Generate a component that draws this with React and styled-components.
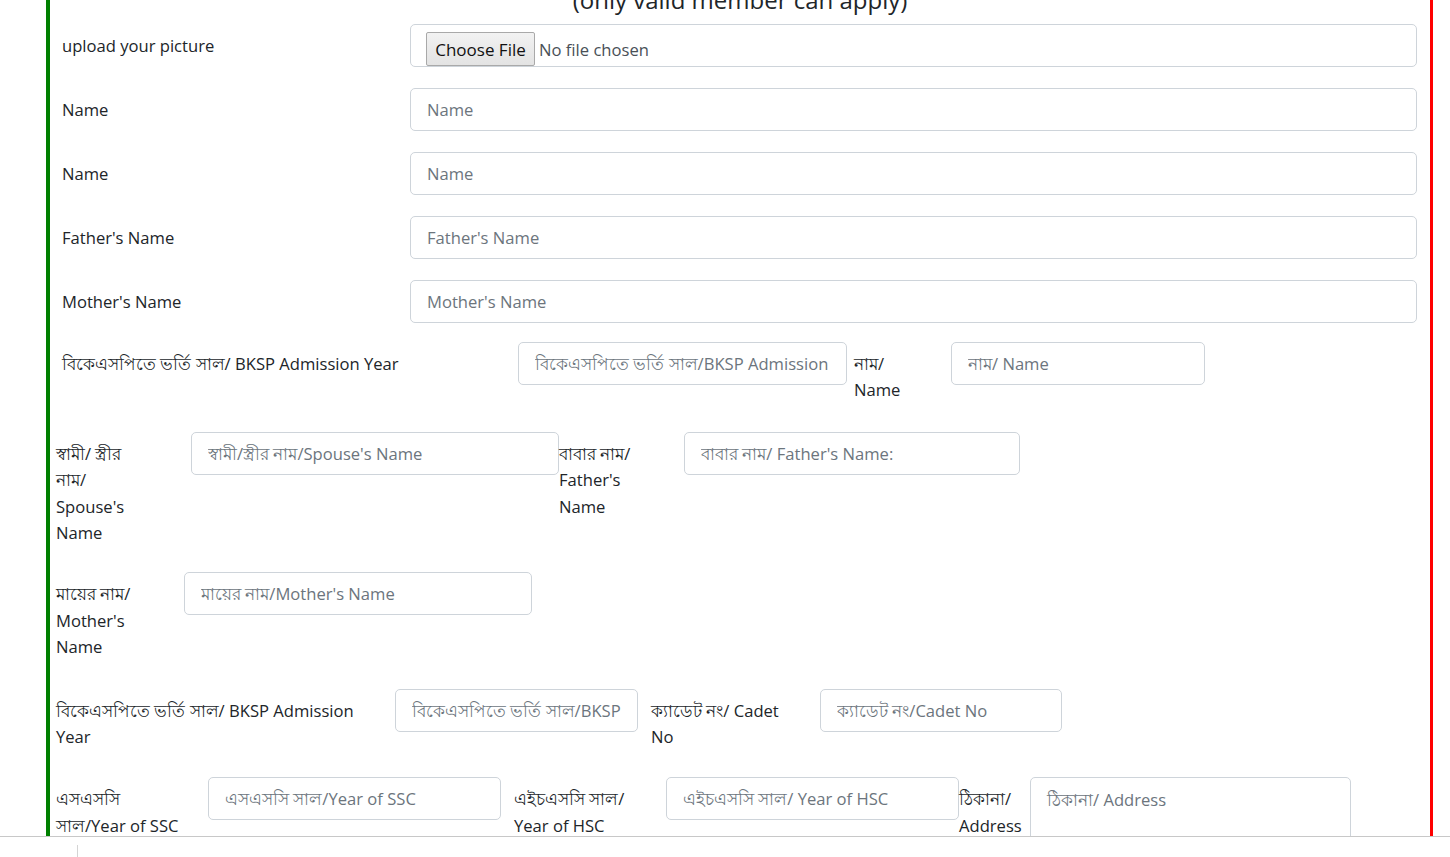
import React from "react";
import styled, { createGlobalStyle } from "styled-components";

const GlobalStyle = createGlobalStyle`
  html, body {
    margin: 0;
    padding: 0;
    overflow: hidden;
    background: #ffffff;
  }
  body {
    font-family: "Open Sans", "Noto Sans", "Liberation Sans", sans-serif;
    font-size: 16.6px;
    color: #212529;
  }
  * {
    box-sizing: border-box;
  }
`;

const Page = styled.div`
  margin-left: 46px;
  width: 1387px;
  min-height: 100vh;
  border-left: 4px solid #008000;
  border-right: 3px solid #ff0000;
`;

const Title = styled.h4`
  margin: -15px 0 10px;
  font-size: 24px;
  font-weight: 400;
  line-height: 29px;
  text-align: center;
`;

const FormRow = styled.div`
  display: flex;
  align-items: center;
  padding: 0 13px 0 12px;
  margin-bottom: ${(p) => p.$mb || 21}px;
`;

const RowLabel = styled.label`
  width: 348px;
  flex: none;
  line-height: 26px;
  padding-top: 1px;
`;

const Control = styled.input`
  height: 43px;
  border: 1px solid #ced4da;
  border-radius: 5px;
  padding: 0 16px;
  font: inherit;
  color: #495057;
  background: #fff;
  flex: ${(p) => (p.$w ? "none" : "1")};
  width: ${(p) => (p.$w ? `${p.$w}px` : "auto")};
  margin-left: ${(p) => p.$ml || 0}px;
  outline: none;

  &::placeholder {
    color: #6c757d;
    opacity: 1;
  }
`;

const FileControl = styled.label`
  flex: 1;
  height: 43px;
  border: 1px solid #ced4da;
  border-radius: 5px;
  padding: 7px 15px 0;
  display: flex;
  align-items: flex-start;
  gap: 4px;
  color: #495057;
`;

const FileButton = styled.span`
  height: 34px;
  width: 109px;
  display: flex;
  align-items: center;
  justify-content: center;
  background: linear-gradient(#f2f2f2, #e3e3e3);
  border: 1px solid #a9a9a9;
  border-radius: 2px;
  color: #111;
  font-size: 17px;
  padding-top: 1px;
`;

const FileText = styled.span`
  line-height: 36px;
`;

const FlexRow = styled.div`
  display: flex;
  align-items: flex-start;
  padding-left: ${(p) => p.$pl}px;
  margin-bottom: ${(p) => p.$mb}px;
`;

const FieldLabel = styled.label`
  flex: none;
  width: ${(p) => p.$w}px;
  margin-left: ${(p) => p.$ml || 0}px;
  padding-top: 9px;
  line-height: 26.4px;
  white-space: nowrap;
`;

const Area = styled.textarea`
  flex: none;
  width: ${(p) => p.$w}px;
  height: 80px;
  border: 1px solid #ced4da;
  border-radius: 5px;
  padding: 9px 16px;
  font: inherit;
  line-height: 26px;
  resize: none;
  outline: none;

  &::placeholder {
    color: #6c757d;
    opacity: 1;
  }
`;

const Footer = styled.div`
  position: fixed;
  left: 0;
  right: 0;
  bottom: 0;
  height: 21px;
  background: #fff;
  border-top: 1px solid #c8c8c8;
  display: flex;
  align-items: flex-end;
  padding-left: 77px;
`;

const FooterDivider = styled.span`
  width: 1px;
  height: 12px;
  background: #d4d4d4;
`;

const Lines = ({ lines, ...rest }) => (
  <FieldLabel {...rest}>
    {lines.map((l, i) => (
      <React.Fragment key={i}>
        {i > 0 && <br />}
        {l}
      </React.Fragment>
    ))}
  </FieldLabel>
);

const simpleRows = [
  { label: "Name", ph: "Name" },
  { label: "Name", ph: "Name" },
  { label: "Father's Name", ph: "Father's Name" },
  { label: "Mother's Name", ph: "Mother's Name", mb: 19 },
];

const App = () => {
  return (
    <>
      <GlobalStyle />
      <Page>
        <Title>(only valid member can apply)</Title>

        <FormRow>
          <RowLabel>upload your picture</RowLabel>
          <FileControl>
            <FileButton>Choose File</FileButton>
            <FileText>No file chosen</FileText>
          </FileControl>
        </FormRow>

        {simpleRows.map((r, i) => (
          <FormRow key={i} $mb={r.mb}>
            <RowLabel>{r.label}</RowLabel>
            <Control placeholder={r.ph} />
          </FormRow>
        ))}

        <FlexRow $pl={12} $mb={28}>
          <Lines $w={456} lines={["বিকেএসপিতে ভর্তি সাল/ BKSP Admission Year"]} />
          <Control $w={329} placeholder="বিকেএসপিতে ভর্তি সাল/BKSP Admission Year" />
          <Lines $ml={7} $w={97} lines={["নাম/", "Name"]} />
          <Control $w={254} placeholder="নাম/ Name" />
        </FlexRow>

        <FlexRow $pl={6} $mb={26}>
          <Lines $w={135} lines={["স্বামী/ স্ত্রীর", "নাম/", "Spouse's", "Name"]} />
          <Control $w={368} placeholder="স্বামী/স্ত্রীর নাম/Spouse's Name" />
          <Lines $w={125} lines={["বাবার নাম/", "Father's", "Name"]} />
          <Control $w={336} placeholder="বাবার নাম/ Father's Name:" />
        </FlexRow>

        <FlexRow $pl={6} $mb={28}>
          <Lines $w={128} lines={["মায়ের নাম/", "Mother's", "Name"]} />
          <Control $w={348} placeholder="মায়ের নাম/Mother's Name" />
        </FlexRow>

        <FlexRow $pl={6} $mb={27}>
          <Lines $w={339} lines={["বিকেএসপিতে ভর্তি সাল/ BKSP Admission", "Year"]} />
          <Control $w={243} placeholder="বিকেএসপিতে ভর্তি সাল/BKSP Admission Year" />
          <Lines $ml={13} $w={169} lines={["ক্যাডেট নং/ Cadet", "No"]} />
          <Control $w={242} placeholder="ক্যাডেট নং/Cadet No" />
        </FlexRow>

        <FlexRow $pl={6} $mb={0}>
          <Lines $w={152} lines={["এসএসসি", "সাল/Year of SSC"]} />
          <Control $w={293} placeholder="এসএসসি সাল/Year of SSC" />
          <Lines $ml={13} $w={152} lines={["এইচএসসি সাল/", "Year of HSC"]} />
          <Control $w={293} placeholder="এইচএসসি সাল/ Year of HSC" />
          <Lines $w={71} lines={["ঠিকানা/", "Address"]} />
          <Area $w={321} placeholder="ঠিকানা/ Address" />
        </FlexRow>
      </Page>
      <Footer>
        <FooterDivider />
      </Footer>
    </>
  );
};

export default App;
